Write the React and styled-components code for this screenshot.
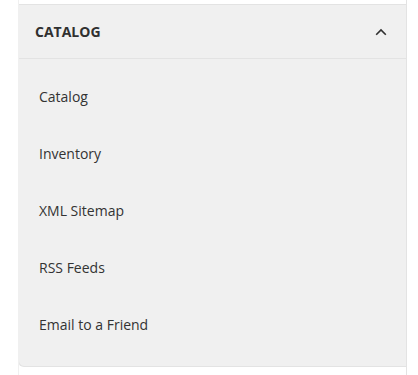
import React from "react";
import styled, { createGlobalStyle } from "styled-components";

const Global = createGlobalStyle`
  html, body { margin: 0; padding: 0; background: #ffffff; }
  body { font-family: "Open Sans", "Noto Sans", sans-serif; }
`;

const Frame = styled.div`
  margin-left: 18px;
  width: 389px;
  height: 375px;
  box-sizing: border-box;
  padding-top: 4px;
  border-left: 1px solid #f0f0f0;
  border-right: 1px solid #e3e3e3;
  overflow: hidden;
`;

const Panel = styled.section`
  margin-left: -1px;
  background: #f0f0f0;
  border-top: 1px solid #e3e3e3;
  border-bottom: 1px solid #e3e3e3;
  border-left: 1px solid #e3e3e3;
  border-bottom-left-radius: 6px;
`;

const Header = styled.div`
  height: 53px;
  display: flex;
  align-items: center;
  justify-content: space-between;
  padding: 0 19px 0 16px;
  border-bottom: 1px solid #e3e3e3;
`;

const Title = styled.h2`
  margin: 0;
  margin-top: -1px;
  font-size: 14px;
  font-weight: 700;
  color: #303030;
  letter-spacing: 0;
`;

const Toggle = styled.span`
  display: flex;
  width: 12px;
  height: 8px;
`;

const List = styled.ul`
  list-style: none;
  margin: 0;
  padding: 9px 0 13px;
`;

const Item = styled.li`
  height: 57px;
  display: flex;
  align-items: center;
  padding-left: 20px;
  font-size: 14px;
  color: #333333;
`;

const items = ["Catalog", "Inventory", "XML Sitemap", "RSS Feeds", "Email to a Friend"];

export default function App() {
  return (
    <>
      <Global />
      <Frame>
        <Panel>
          <Header>
            <Title>CATALOG</Title>
            <Toggle>
              <svg width="12" height="8" viewBox="0 0 12 8">
                <polyline points="1.2,6.8 6,2 10.8,6.8" fill="none" stroke="#303030" strokeWidth="1.6" />
              </svg>
            </Toggle>
          </Header>
          <List>
            {items.map((t) => (
              <Item key={t}>{t}</Item>
            ))}
          </List>
        </Panel>
      </Frame>
    </>
  );
}
